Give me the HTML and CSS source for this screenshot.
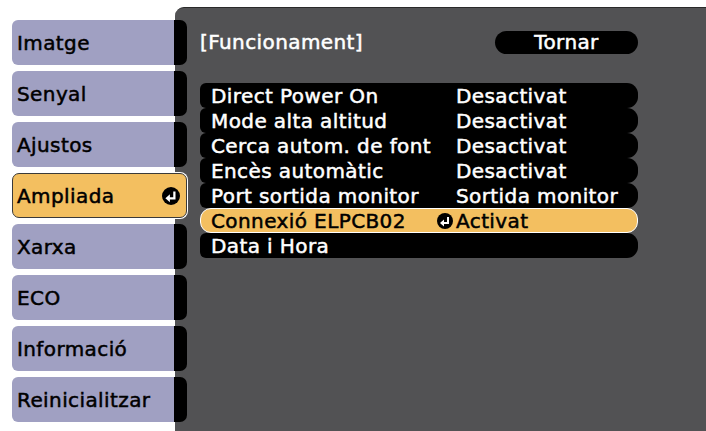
FILE: index.html
```html
<!DOCTYPE html>
<html lang="ca">
<head>
    <meta charset="UTF-8">
    <title>Ampliada</title>
    <link rel="stylesheet" href="styles.css">
</head>
<body>
    <div class="screen">
        <div class="tabs">
            <div class="tab"><span class="tab-label">Imatge</span><span class="tab-cap"></span></div>
            <div class="tab"><span class="tab-label">Senyal</span><span class="tab-cap"></span></div>
            <div class="tab"><span class="tab-label">Ajustos</span><span class="tab-cap"></span></div>
            <div class="tab active">
                <span class="tab-label">Ampliada</span>
                <svg class="enter big" viewBox="0 0 16 16"><circle cx="8" cy="8" r="8" fill="#000"/><path d="M11 4 V10 H6" stroke="#fff" stroke-width="2" fill="none"/><path d="M3 10 L7 6.5 V13.5 Z" fill="#fff"/></svg>
            </div>
            <div class="tab"><span class="tab-label">Xarxa</span><span class="tab-cap"></span></div>
            <div class="tab"><span class="tab-label">ECO</span><span class="tab-cap"></span></div>
            <div class="tab"><span class="tab-label">Informació</span><span class="tab-cap"></span></div>
            <div class="tab"><span class="tab-label">Reinicialitzar</span><span class="tab-cap"></span></div>
        </div>

        <div class="panel">
            <div class="panel-head">
                <span class="title">[Funcionament]</span>
                <span class="back">Tornar</span>
            </div>

            <div class="rows">
                <div class="row"><span>Direct Power On</span><span></span><span>Desactivat</span></div>
                <div class="row"><span>Mode alta altitud</span><span></span><span>Desactivat</span></div>
                <div class="row"><span>Cerca autom. de font</span><span></span><span>Desactivat</span></div>
                <div class="row"><span>Encès automàtic</span><span></span><span>Desactivat</span></div>
                <div class="row"><span>Port sortida monitor</span><span></span><span>Sortida monitor</span></div>
                <div class="row selected">
                    <span>Connexió ELPCB02</span>
                    <svg class="enter" viewBox="0 0 16 16"><circle cx="8" cy="8" r="8" fill="#000"/><path d="M11 4 V10 H6" stroke="#fff" stroke-width="2" fill="none"/><path d="M3 10 L7 6.5 V13.5 Z" fill="#fff"/></svg>
                    <span>Activat</span>
                </div>
                <div class="row"><span>Data i Hora</span><span></span><span></span></div>
            </div>
        </div>
    </div>
</body>
</html>
```

FILE: styles.css
```css
* {
    box-sizing: border-box;
}

body {
    margin: 0;
    padding: 0;
    background-color: #fff;
    font-family: "DejaVu Sans", sans-serif;
    font-size: 20px;
    letter-spacing: 0.4px;
    -webkit-text-stroke: 0.5px currentColor;
}

.screen {
    display: flex;
    height: 431px;
    padding-top: 7px;
    overflow: hidden;
}

.tabs {
    position: relative;
    z-index: 1;
    display: flex;
    flex-direction: column;
    gap: 6px;
    width: 187px;
    flex-shrink: 0;
    padding: 13px 0 0 12px;
}

.tab {
    display: flex;
    height: 45px;
}

.tab-label {
    flex: 1;
    display: flex;
    align-items: center;
    padding-left: 5px;
    background-color: #a0a0c2;
    border-radius: 6px 0 0 6px;
    color: #000;
}

.tab-cap {
    width: 13px;
    background-color: #000;
    border-radius: 0 7px 7px 0;
}

.tab.active {
    align-items: center;
    width: 175px;
    background-color: #f3bf60;
    border: 1px solid #3a3a3a;
    border-radius: 7px;
    box-shadow: 0 0 0 1px #fff;
    padding-right: 6px;
}

.tab.active .tab-label {
    background: none;
    padding-left: 4px;
    height: 100%;
}

.enter {
    width: 16px;
    height: 16px;
    display: block;
}

.enter.big {
    width: 18px;
    height: 18px;
}

.panel {
    flex: 1;
    margin-left: -12px;
    background-color: #525254;
    border-top: 1px solid #2a2a2a;
    border-radius: 9px 0 0 0;
    padding: 22px 68px 0 25px;
    color: #fff;
}

.panel-head {
    display: flex;
    align-items: center;
    justify-content: space-between;
    height: 24px;
    margin-bottom: 29px;
}

.back {
    width: 143px;
    height: 23px;
    line-height: 23px;
    text-align: center;
    background-color: #000;
    border-radius: 12px;
}

.rows {
    display: flex;
    flex-direction: column;
}

.row {
    display: grid;
    grid-template-columns: 226px 19px 1fr;
    align-items: center;
    height: 25px;
    padding-left: 11px;
    background-color: #000;
    border-radius: 6px 11px 11px 6px;
    white-space: nowrap;
}

.row.selected {
    background-color: #f3bf60;
    color: #000;
    border: 1px solid #fff;
    border-radius: 11px;
    padding-left: 10px;
}
```
